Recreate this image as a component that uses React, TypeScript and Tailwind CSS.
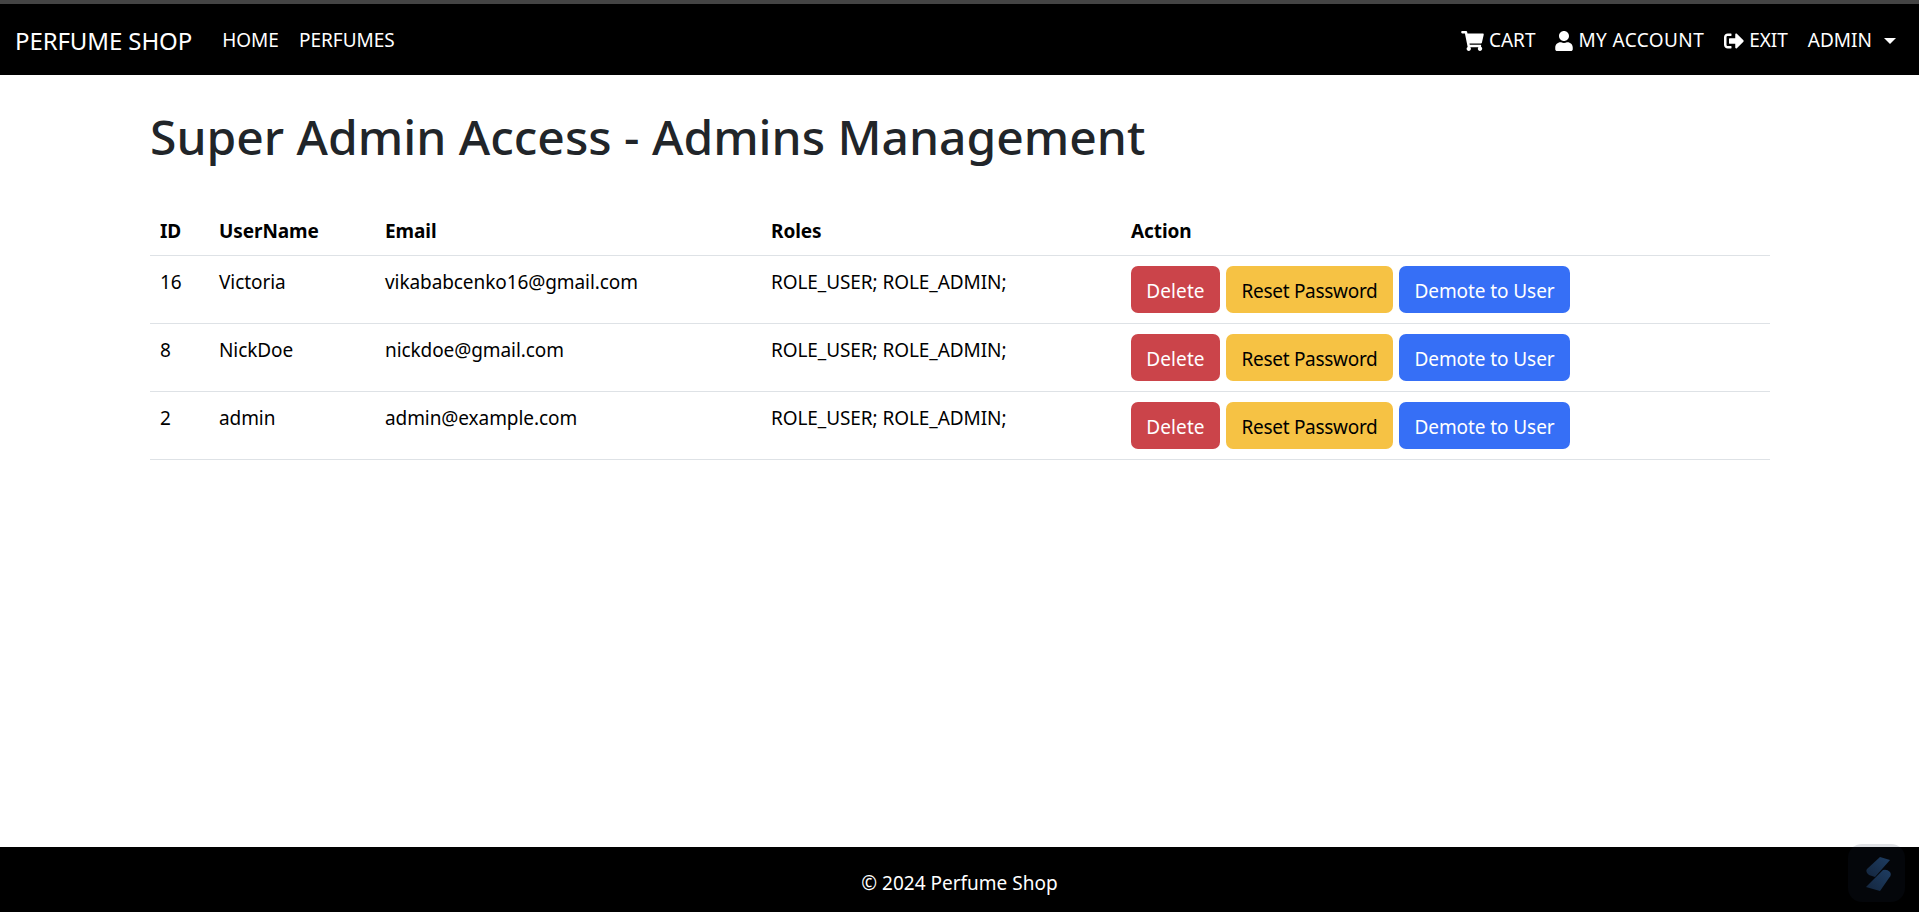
import { FaShoppingCart, FaUser, FaSignOutAlt } from "react-icons/fa";

const rows = [
  { id: "16", name: "Victoria", email: "vikababcenko16@gmail.com" },
  { id: "8", name: "NickDoe", email: "nickdoe@gmail.com" },
  { id: "2", name: "admin", email: "admin@example.com" },
];

function NavLink({ children }: { children: React.ReactNode }) {
  return <a className="flex items-center gap-[5px] px-[10px] text-[#ffffff] text-[19px] leading-[29px] uppercase whitespace-nowrap">{children}</a>;
}

export default function App() {
  return (
    <div className="min-h-[912px] flex flex-col bg-white text-[19px] text-[#212529] font-['Noto_Sans','Open_Sans',sans-serif]">
      <div className="h-[4px] bg-[#444444]" />
      <nav className="h-[71px] bg-black flex items-center justify-between pl-[15px] pr-[13px] pt-[2px]">
        <div className="flex items-center">
          <a className="text-[24px] leading-[36px] text-white mr-[20px] whitespace-nowrap tracking-[-0.1px]">PERFUME SHOP</a>
          <NavLink>Home</NavLink>
          <NavLink>Perfumes</NavLink>
        </div>
        <div className="flex items-center">
          <NavLink><FaShoppingCart className="w-[23px] h-[20px]" />Cart</NavLink>
          <NavLink><FaUser className="w-[18px] h-[20px]" /><span className="tracking-[0.4px]">My Account</span></NavLink>
          <NavLink><FaSignOutAlt className="w-[20px] h-[20px]" />Exit</NavLink>
          <NavLink>
            Admin
            <span className="ml-[7px] w-0 h-0 border-x-[6px] border-x-transparent border-t-[6px] border-t-white" />
          </NavLink>
        </div>
      </nav>
      <main className="flex-1 px-[150px]">
        <h1 className="mt-[33px] mb-[41px] text-[48px] leading-[58px] font-medium whitespace-nowrap">Super Admin Access - Admins Management</h1>
        <table className="w-[1620px] border-collapse table-fixed text-black tracking-[-0.08px]">
          <thead>
            <tr className="border-b border-[#dee2e6] h-[48px] font-bold text-left">
              <th className="w-[59px] pl-[10px]">ID</th>
              <th className="w-[166px] pl-[10px]">UserName</th>
              <th className="w-[386px] pl-[10px]">Email</th>
              <th className="w-[360px] pl-[10px]">Roles</th>
              <th className="pl-[10px]">Action</th>
            </tr>
          </thead>
          <tbody>
            {rows.map((r) => (
              <tr key={r.id} className="border-b border-[#dee2e6] h-[68px]">
                <td className="pl-[10px] pt-[12px] align-top leading-[29px]">{r.id}</td>
                <td className="pl-[10px] pt-[12px] align-top leading-[29px]">{r.name}</td>
                <td className="pl-[10px] pt-[12px] align-top leading-[29px]">{r.email}</td>
                <td className="pl-[10px] pt-[12px] align-top leading-[29px]">ROLE_USER; ROLE_ADMIN;</td>
                <td className="pl-[10px] align-middle">
                  <div className="flex gap-[6px]">
                    <button className="h-[47px] w-[89px] pt-[5px] rounded-[7px] bg-[#cb444a] text-white tracking-[0.1px]">Delete</button>
                    <button className="h-[47px] w-[167px] pt-[5px] rounded-[7px] bg-[#f6c244] text-black tracking-[-0.3px]">Reset Password</button>
                    <button className="h-[47px] w-[171px] pt-[5px] rounded-[7px] bg-[#366ff6] text-white">Demote to User</button>
                  </div>
                </td>
              </tr>
            ))}
          </tbody>
        </table>
      </main>
      <footer className="relative h-[65px] bg-black text-white flex items-center justify-center pt-[7px]">
        © 2024 Perfume Shop
        <div className="absolute right-[14px] bottom-[10px] w-[57px] h-[58px] rounded-[14px] bg-[rgba(30,40,70,0.14)] flex items-center justify-center pl-[4px] pt-[2px]">
          <svg width="25" height="34" viewBox="0 0 25 34">
            <defs>
              <linearGradient id="logoA" x1="1" y1="0" x2="0" y2="1">
                <stop offset="0" stopColor="#1e3d62" />
                <stop offset="1" stopColor="#14263e" />
              </linearGradient>
            </defs>
            <path d="M14 0 L24 3 L9 20 L3 18 Q-1 15 1 12 Z" fill="url(#logoA)" />
            <path d="M17 13 Q21 12 24 15 Q26 18 23 21 L14 34 L0 30 Z" fill="url(#logoA)" />
          </svg>
        </div>
      </footer>
    </div>
  );
}
